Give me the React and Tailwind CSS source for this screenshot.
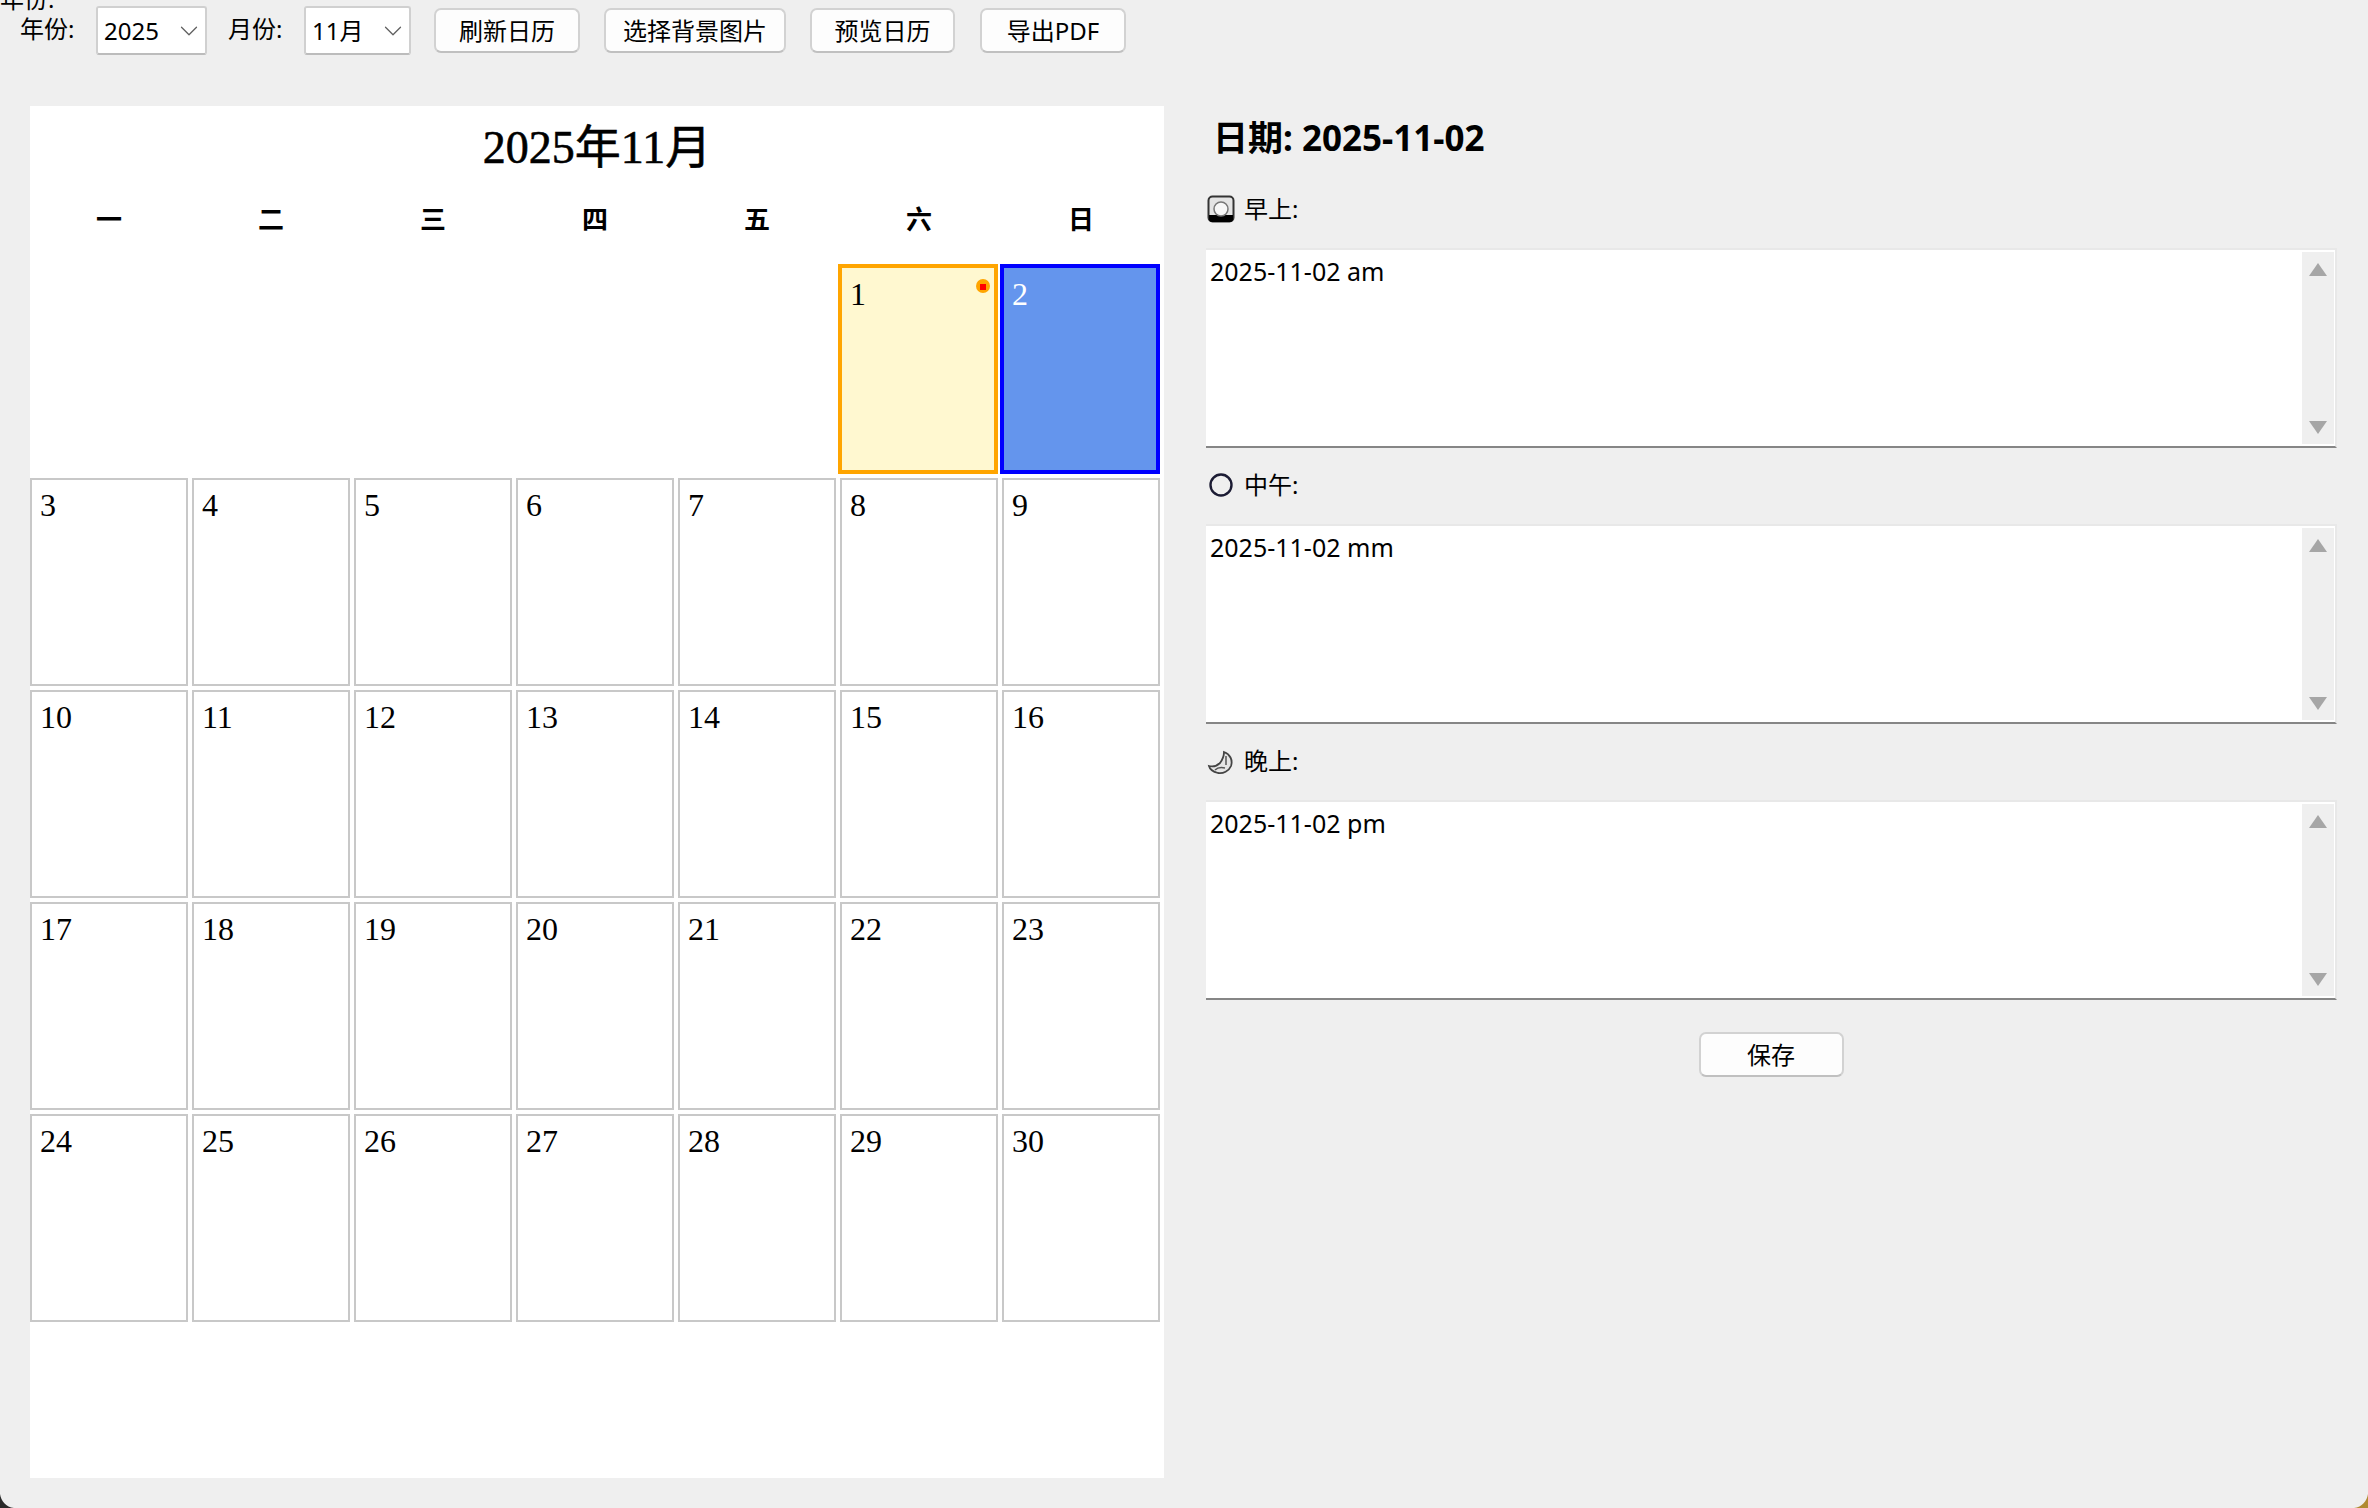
import { ChevronDown } from 'lucide-react';

const uiFont = "font-['Noto_Sans','Noto_Sans_CJK_SC',sans-serif]";
const calFont = "font-['Liberation_Serif','Noto_Sans_CJK_SC',serif]";

const weekdays = ['一', '二', '三', '四', '五', '六', '日'];
const days = Array.from({ length: 30 }, (_, i) => i + 1);

function Combo({ value, className }) {
  return (
    <div
      className={`flex h-[49px] items-center justify-between rounded-[3px] border-2 border-[#d0d0d0] border-b-[#bcbcbc] bg-white pr-[1px] pl-[6px] ${className}`}
    >
      <span>{value}</span>
      <ChevronDown size={30} strokeWidth={1} className="text-[#606060]" />
    </div>
  );
}

function ToolButton({ children, className }) {
  return (
    <button
      className={`flex h-[45px] items-center justify-center rounded-[7px] border-2 border-[#d2d2d2] border-b-[#c0c0c0] bg-[#fdfdfd] ${className}`}
    >
      {children}
    </button>
  );
}

function DayCell({ day }) {
  if (day === 1) {
    return (
      <div className="relative -mt-[2px] -ml-[2px] border-4 border-[#ffa500] bg-[#fff8d0] pt-[7px] pl-[8px] text-[32px] leading-[38px] text-black">
        {day}
        <span className="absolute top-[11px] right-[4px] h-[14px] w-[14px] rounded-full bg-[#ffa500]">
          <span className="absolute top-[5px] left-[4px] h-[6px] w-[6px] bg-[#ff0000]" />
        </span>
      </div>
    );
  }
  if (day === 2) {
    return (
      <div className="-mt-[2px] -ml-[2px] border-4 border-[#0000ff] bg-[#6495ed] pt-[7px] pl-[8px] text-[32px] leading-[38px] text-white">
        {day}
      </div>
    );
  }
  return (
    <div className="border-2 border-[#c8c8c8] bg-white pt-[6px] pl-[8px] text-[32px] leading-[38px] text-black">
      {day}
    </div>
  );
}

function Calendar() {
  return (
    <div className={`flex h-[1372px] w-[1134px] flex-col bg-white ${calFont}`}>
      <div className="flex h-[80px] items-center justify-center pt-[3px] text-[46px] font-normal text-black [-webkit-text-stroke:0.6px_black]">
        2025年11月
      </div>
      <div className="grid h-[80px] grid-cols-[repeat(7,158px)] items-center gap-x-[4px] pb-[12px]">
        {weekdays.map((d) => (
          <div key={d} className="text-center text-[26px] font-bold text-black">
            {d}
          </div>
        ))}
      </div>
      <div className="grid grid-cols-[repeat(7,158px)] grid-rows-[repeat(5,208px)] gap-[4px]">
        <div className="col-span-5" />
        {days.map((day) => (
          <DayCell key={day} day={day} />
        ))}
      </div>
    </div>
  );
}

function NoteIcon({ type }) {
  if (type === 'am') {
    return (
      <svg width="28" height="28" viewBox="0 0 28 28" className="shrink-0">
        <rect x="1.5" y="1.5" width="25" height="25" rx="4" fill="#e4e4e4" stroke="#333" strokeWidth="2" />
        <path d="M2 20h24v4a3 3 0 0 1-3 3H5a3 3 0 0 1-3-3z" fill="#000" />
        <circle cx="14" cy="14" r="7" fill="#f7f7f7" stroke="#777" strokeWidth="1.5" />
      </svg>
    );
  }
  if (type === 'mm') {
    return (
      <svg width="28" height="28" viewBox="0 0 28 28" className="shrink-0">
        <circle cx="14" cy="14" r="10.5" fill="none" stroke="#1c1c34" strokeWidth="2.4" />
      </svg>
    );
  }
  return (
    <svg width="28" height="28" viewBox="0 0 28 28" className="shrink-0">
      <path d="M2 19c4 1 8 0 11-3 3-4 4-8 4-11 6 2 9 8 7 14-2 5-8 8-13 7-4-1-8-3-9-7z" fill="#e6e6e6" stroke="#444" strokeWidth="1.8" />
      <path d="M19 9v9M8 23c3-3 6-3 10-2" fill="none" stroke="#555" strokeWidth="1.5" />
    </svg>
  );
}

function NoteField({ type, label, text }) {
  return (
    <div className="flex flex-col">
      <div className="flex h-[76px] items-center gap-[9px] pb-[2px] pl-[1px]">
        <NoteIcon type={type} />
        <span>{label}</span>
      </div>
      <div className="flex h-[200px] w-[1131px] border-t-2 border-r-2 border-b-2 border-t-[#e8e8e8] border-r-[#e8e8e8] border-b-[#868686] bg-white">
        <div className="flex-1 pt-[4px] pl-[4px] text-[25px] leading-[34px]">{text}</div>
        <div className="my-[2px] mr-[1px] flex w-[32px] flex-col items-center justify-between bg-[#efefef] pt-[11px] pb-[10px]">
          <span className="h-0 w-0 border-x-[9px] border-b-[13px] border-x-transparent border-b-[#a6a6a6]" />
          <span className="h-0 w-0 border-x-[9px] border-t-[13px] border-x-transparent border-t-[#a6a6a6]" />
        </div>
      </div>
    </div>
  );
}

export default function App() {
  return (
    <div className={`relative h-[1508px] w-[2368px] overflow-hidden bg-[#efefef] text-[24px] text-black ${uiFont}`}>
      {/* leftover label clipped by the window top */}
      <span className="absolute -top-[18px] left-0 leading-[34px]">年份:</span>

      <div className="flex h-[106px] items-start pt-[6px] pl-[20px]">
        <span className="flex h-[49px] w-[76px] items-center pb-[4px]">年份:</span>
        <Combo value="2025" className="w-[111px]" />
        <span className="ml-[21px] flex h-[49px] w-[76px] items-center pb-[4px]">月份:</span>
        <Combo value="11月" className="w-[107px]" />
        <div className="ml-[23px] flex gap-[24px] pt-[2px]">
          <ToolButton className="w-[146px]">刷新日历</ToolButton>
          <ToolButton className="w-[182px]">选择背景图片</ToolButton>
          <ToolButton className="w-[145px]">预览日历</ToolButton>
          <ToolButton className="ml-[1px] w-[146px]">导出PDF</ToolButton>
        </div>
      </div>

      <div className="flex pl-[30px]">
        <Calendar />
        <div className="ml-[42px] flex flex-col">
          <div className="h-[66px] pt-[4px] pl-[7px] text-[35px] leading-[56px] font-bold">
            日期: 2025-11-02
          </div>
          <NoteField type="am" label="早上:" text="2025-11-02 am" />
          <NoteField type="mm" label="中午:" text="2025-11-02 mm" />
          <NoteField type="pm" label="晚上:" text="2025-11-02 pm" />
          <div className="flex w-[1130px] justify-center pt-[32px]">
            <ToolButton className="w-[145px]">保存</ToolButton>
          </div>
        </div>
      </div>

      {/* window corners, what is behind the rounded edge */}
      <svg width="14" height="14" viewBox="0 0 14 14" className="absolute bottom-0 left-0">
        <path d="M0 0C1 7 6 13 14 14H0z" fill="#2a2a2a" />
      </svg>
      <svg width="14" height="14" viewBox="0 0 14 14" className="absolute right-0 bottom-0">
        <path d="M14 0C13 7 8 13 0 14H14z" fill="#b08a30" />
      </svg>
    </div>
  );
}
